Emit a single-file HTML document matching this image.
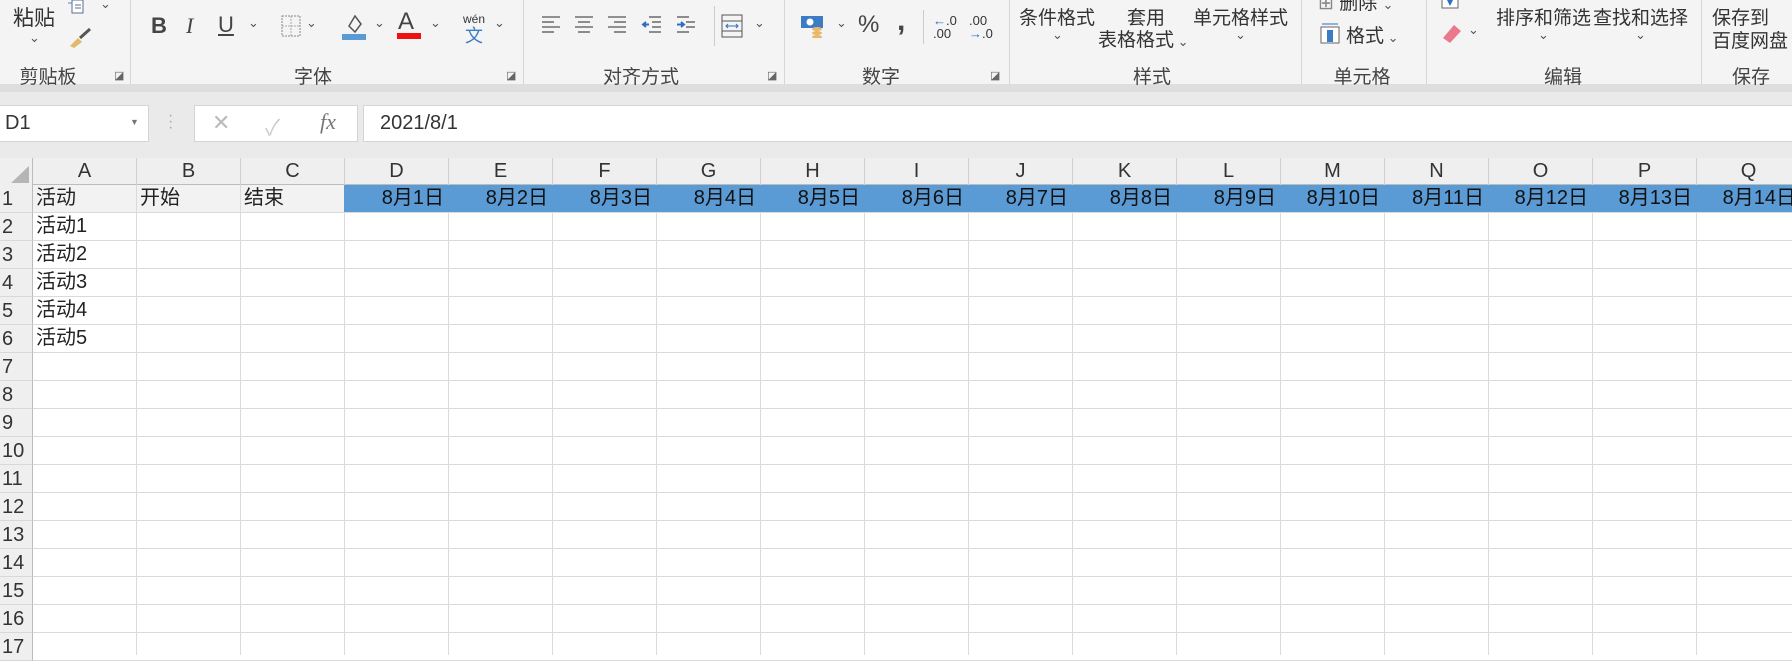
<!DOCTYPE html>
<html><head><meta charset="utf-8"><style>
*{margin:0;padding:0;box-sizing:border-box}
body{width:1792px;height:642px;overflow:hidden;background:#fff;font-family:"Liberation Sans","Noto Sans CJK SC",sans-serif;color:#222;position:relative}
.a{position:absolute;white-space:nowrap}
.rib{position:absolute;left:0;top:0;width:1792px;height:89px;background:#f4f4f4}
.t{font-size:19px;color:#333}
.gl{font-size:19px;color:#444;top:62px;transform:translateX(-50%)}
.sep{position:absolute;top:0;width:1px;height:84px;background:#d6d6d6}
.chev{font-size:13px;color:#555}
.band{position:absolute;left:0;top:89px;width:1792px;height:71px;background:#eaeaea}
.box{position:absolute;background:#fff;border:1px solid #d4d4d4}
.hdr{position:absolute;top:158px;height:27px;background:#efefef;border-bottom:1px solid #bcbcbc}
.ch{position:absolute;top:158px;height:27px;font-size:20px;color:#333;text-align:center;line-height:27px;border-right:1px solid #d0d0d0;width:104px}
.rh{position:absolute;left:0;width:33px;height:28px;font-size:20px;line-height:28px;padding-left:2px;background:#efefef;border-bottom:1px solid #d8d8d8;border-right:1px solid #bcbcbc;color:#333}
.cell{position:absolute;font-size:20px;line-height:28px;color:#222}
</style></head><body>
<div class="rib"></div>
<div class="a" style="left:0;top:84px;width:1792px;height:8px;background:#dedede"></div>
<!-- clipboard -->
<div class="a t" style="left:13px;top:2px;font-size:21px">粘贴</div>
<div class="a chev" style="left:29px;top:30px">⌄</div>
<svg class="a" style="left:66px;top:0" width="20" height="16"><rect x="6" y="0" width="11" height="13" fill="#fff" stroke="#5a6e8a"/><line x1="9" y1="5" x2="15" y2="5" stroke="#5a6e8a"/><line x1="9" y1="8" x2="15" y2="8" stroke="#5a6e8a"/><line x1="2" y1="3" x2="6" y2="3" stroke="#4a8ad0"/></svg>
<div class="a chev" style="left:100px;top:-4px">⌄</div>
<svg class="a" style="left:68px;top:26px" width="26" height="24"><path d="M2 20 L10 12 L14 16 L6 22 Z" fill="#e2b86a"/><path d="M12 12 L22 3" stroke="#555" stroke-width="3"/></svg>
<div class="a gl" style="left:48px">剪贴板</div>
<div class="a" style="left:114px;top:69px;font-size:11px;color:#666">◪</div>
<div class="sep" style="left:130px"></div>
<!-- font -->
<div class="a" style="left:151px;top:13px;font-size:22px;font-weight:bold;color:#444">B</div>
<div class="a" style="left:186px;top:13px;font-size:22px;font-style:italic;font-family:'Liberation Serif',serif;color:#444">I</div>
<div class="a" style="left:218px;top:12px;font-size:22px;text-decoration:underline;color:#444">U</div>
<div class="a chev" style="left:248px;top:15px">⌄</div>
<svg class="a" style="left:281px;top:15px" width="20" height="22"><rect x="1" y="1" width="18" height="20" fill="none" stroke="#888" stroke-dasharray="2 1"/><line x1="10" y1="1" x2="10" y2="21" stroke="#aaa" stroke-dasharray="2 1"/><line x1="1" y1="11" x2="19" y2="11" stroke="#aaa" stroke-dasharray="2 1"/></svg>
<div class="a chev" style="left:306px;top:15px">⌄</div>
<svg class="a" style="left:341px;top:12px" width="26" height="28"><path d="M8 14 L14 4 L20 12 L14 20 Z" fill="none" stroke="#555" stroke-width="1.5"/><rect x="1" y="22" width="24" height="6" fill="#5b9bd5"/></svg>
<div class="a chev" style="left:374px;top:15px">⌄</div>
<div class="a" style="left:398px;top:8px;font-size:24px;color:#444">A</div>
<div class="a" style="left:397px;top:33px;width:24px;height:6px;background:#ee1111"></div>
<div class="a chev" style="left:430px;top:15px">⌄</div>
<div class="a" style="left:463px;top:12px;font-size:12px;color:#333">wén</div>
<div class="a" style="left:465px;top:22px;font-size:18px;color:#3b7cc4">文</div>
<div class="a chev" style="left:494px;top:15px">⌄</div>
<div class="a gl" style="left:313px">字体</div>
<div class="a" style="left:506px;top:69px;font-size:11px;color:#666">◪</div>
<div class="sep" style="left:523px"></div>
<!-- align -->
<svg class="a" style="left:542px;top:15px" width="170" height="22" stroke="#555" stroke-width="1.3">
<g><line x1="0" y1="2" x2="18" y2="2"/><line x1="0" y1="7" x2="12" y2="7"/><line x1="0" y1="12" x2="18" y2="12"/><line x1="0" y1="17" x2="12" y2="17"/></g>
<g transform="translate(33 0)"><line x1="0" y1="2" x2="18" y2="2"/><line x1="3" y1="7" x2="15" y2="7"/><line x1="0" y1="12" x2="18" y2="12"/><line x1="3" y1="17" x2="15" y2="17"/></g>
<g transform="translate(66 0)"><line x1="0" y1="2" x2="18" y2="2"/><line x1="6" y1="7" x2="18" y2="7"/><line x1="0" y1="12" x2="18" y2="12"/><line x1="6" y1="17" x2="18" y2="17"/></g>
<g transform="translate(101 0)"><line x1="6" y1="2" x2="18" y2="2"/><line x1="9" y1="7" x2="18" y2="7"/><line x1="9" y1="12" x2="18" y2="12"/><line x1="6" y1="17" x2="18" y2="17"/><path d="M6 9.5 L0 9.5 M3 7 L0 9.5 L3 12" stroke="#2d6fc0" stroke-width="2"/></g>
<g transform="translate(135 0)"><line x1="0" y1="2" x2="12" y2="2"/><line x1="9" y1="7" x2="18" y2="7"/><line x1="9" y1="12" x2="18" y2="12"/><line x1="0" y1="17" x2="12" y2="17"/><path d="M0 9.5 L7 9.5 M4 7 L7 9.5 L4 12" stroke="#2d6fc0" stroke-width="2"/></g>
</svg>
<div class="a" style="left:714px;top:6px;width:1px;height:40px;background:#ccc"></div>
<svg class="a" style="left:721px;top:14px" width="22" height="24"><rect x="1" y="1" width="20" height="22" fill="none" stroke="#555"/><line x1="1" y1="7" x2="21" y2="7" stroke="#555"/><line x1="1" y1="17" x2="21" y2="17" stroke="#555"/><path d="M5 12 H17 M7 10 L5 12 L7 14 M15 10 L17 12 L15 14" stroke="#2d6fc0" fill="none"/></svg>
<div class="a chev" style="left:754px;top:15px">⌄</div>
<div class="a gl" style="left:641px">对齐方式</div>
<div class="a" style="left:767px;top:69px;font-size:11px;color:#666">◪</div>
<div class="sep" style="left:784px"></div>
<!-- number -->
<svg class="a" style="left:800px;top:14px" width="26" height="24"><rect x="1" y="2" width="22" height="12" fill="#3b7cc4"/><circle cx="10" cy="8" r="3.5" fill="#fff"/><ellipse cx="17" cy="15" rx="5" ry="2" fill="#e8b86a"/><ellipse cx="17" cy="19" rx="5" ry="2" fill="#e8b86a"/><ellipse cx="17" cy="23" rx="5" ry="2" fill="#e8b86a"/></svg>
<div class="a chev" style="left:836px;top:15px">⌄</div>
<div class="a" style="left:858px;top:11px;font-size:24px;color:#444">%</div>
<div class="a" style="left:897px;top:4px;font-size:30px;font-weight:bold;color:#444">,</div>
<div class="a" style="left:923px;top:10px;width:1px;height:34px;background:#ccc"></div>
<div class="a" style="left:933px;top:14px;font-size:13px;line-height:13px;color:#333"><span style="color:#2d6fc0">←</span>.0<br>.00</div>
<div class="a" style="left:969px;top:14px;font-size:13px;line-height:13px;color:#333">.00<br><span style="color:#2d6fc0">→</span>.0</div>
<div class="a gl" style="left:881px">数字</div>
<div class="a" style="left:990px;top:69px;font-size:11px;color:#666">◪</div>
<div class="sep" style="left:1009px"></div>
<!-- styles -->
<div class="a t" style="left:1019px;top:3px">条件格式</div>
<div class="a chev" style="left:1052px;top:27px">⌄</div>
<div class="a t" style="left:1127px;top:3px">套用</div>
<div class="a t" style="left:1098px;top:25px">表格格式<span class="chev"> ⌄</span></div>
<div class="a t" style="left:1193px;top:3px">单元格样式</div>
<div class="a chev" style="left:1235px;top:27px">⌄</div>
<div class="a gl" style="left:1152px">样式</div>
<div class="sep" style="left:1301px"></div>
<!-- cells -->
<div class="a t" style="left:1318px;top:-12px"><span style="color:#888">⊞</span> 删除 <span class="chev">⌄</span></div>
<svg class="a" style="left:1320px;top:22px" width="22" height="22"><rect x="1" y="5" width="18" height="16" fill="#fff" stroke="#666"/><rect x="7" y="8" width="6" height="12" fill="#3b7cc4"/><path d="M2 2 H18" stroke="#2d6fc0"/></svg>
<div class="a t" style="left:1346px;top:21px">格式<span class="chev"> ⌄</span></div>
<div class="a gl" style="left:1362px">单元格</div>
<div class="sep" style="left:1426px"></div>
<!-- edit -->
<svg class="a" style="left:1441px;top:0" width="20" height="10"><rect x="1" y="-5" width="16" height="13" fill="#fff" stroke="#666"/><path d="M6 0 L9 6 L12 0Z" fill="#2d6fc0"/></svg>
<svg class="a" style="left:1440px;top:22px" width="24" height="22"><path d="M3 16 L14 3 L21 9 L10 21 Z" fill="#e87a8c"/></svg>
<div class="a chev" style="left:1468px;top:22px">⌄</div>
<div class="a t" style="left:1496px;top:3px">排序和筛选</div>
<div class="a chev" style="left:1538px;top:27px">⌄</div>
<div class="a t" style="left:1593px;top:3px">查找和选择</div>
<div class="a chev" style="left:1635px;top:27px">⌄</div>
<div class="a gl" style="left:1563px">编辑</div>
<div class="sep" style="left:1701px"></div>
<div class="a t" style="left:1712px;top:3px">保存到</div>
<div class="a t" style="left:1712px;top:26px">百度网盘</div>
<div class="a gl" style="left:1751px">保存</div>

<!-- formula bar -->
<div class="band" style="top:92px;height:68px"></div>
<div class="box" style="left:-1px;top:105px;width:150px;height:37px"></div>
<div class="a" style="left:5px;top:112px;font-size:20px;color:#333">D1</div>
<div class="a" style="left:130px;top:117px;font-size:9px;color:#777">▼</div>
<div class="a" style="left:168px;top:113px;font-size:16px;color:#aaa;line-height:6px">·<br>·<br>·</div>
<div class="box" style="left:194px;top:105px;width:164px;height:37px"></div>
<div class="a" style="left:212px;top:110px;font-size:22px;color:#bbb">✕</div>
<div class="a" style="left:265px;top:110px;font-size:22px;color:#ccc">✓</div>
<div class="a" style="left:320px;top:109px;font-size:22px;font-style:italic;font-family:'Liberation Serif',serif;color:#777">fx</div>
<div class="box" style="left:363px;top:105px;width:1440px;height:37px"></div>
<div class="a" style="left:380px;top:112px;font-size:20px;color:#333">2021/8/1</div>

<!-- grid -->
<div class="hdr" style="left:0;width:1792px"></div>
<div class="a" style="left:0;top:158px;width:33px;height:27px;background:#efefef;border-right:1px solid #bcbcbc"></div>
<svg class="a" style="left:10px;top:166px" width="20" height="18"><path d="M19 0 L19 17 L1 17 Z" fill="#b5b5b5"/></svg>
<div id="g"></div>
<script>
var s='';
var L='ABCDEFGHIJKLMNOPQ';
for(var i=0;i<17;i++){var x=33+i*104;s+='<div class="ch" style="left:'+x+'px">'+L[i]+'</div>';}
s+='<div class="a" style="left:33px;top:185px;width:311px;height:28px;background:#f2f2f2"></div>';
for(var r=1;r<=17;r++){var y=185+(r-1)*28;
 s+='<div class="a" style="left:33px;top:'+(y+27)+'px;width:1759px;height:1px;background:#dadada"></div>';
 s+='<div class="rh" style="top:'+y+'px">'+r+'</div>';}
for(var i=1;i<=17;i++){var x=33+i*104-1;s+='<div class="a" style="left:'+x+'px;top:185px;width:1px;height:470px;background:#dadada"></div>';}
s+='<div class="a" style="left:344px;top:185px;width:1448px;height:27px;background:#5b9bd5"></div>';
var A=['活动','活动1','活动2','活动3','活动4','活动5'];
for(var r=0;r<6;r++)s+='<div class="cell" style="left:36px;top:'+(184+r*28)+'px">'+A[r]+'</div>';
s+='<div class="cell" style="left:140px;top:184px">开始</div><div class="cell" style="left:244px;top:184px">结束</div>';
for(var d=1;d<=14;d++){var x=344+(d-1)*104;s+='<div class="cell" style="left:'+x+'px;top:184px;width:100px;text-align:right;color:#111">8月'+d+'日</div>';}
document.getElementById('g').innerHTML=s;
</script>
</body></html>
